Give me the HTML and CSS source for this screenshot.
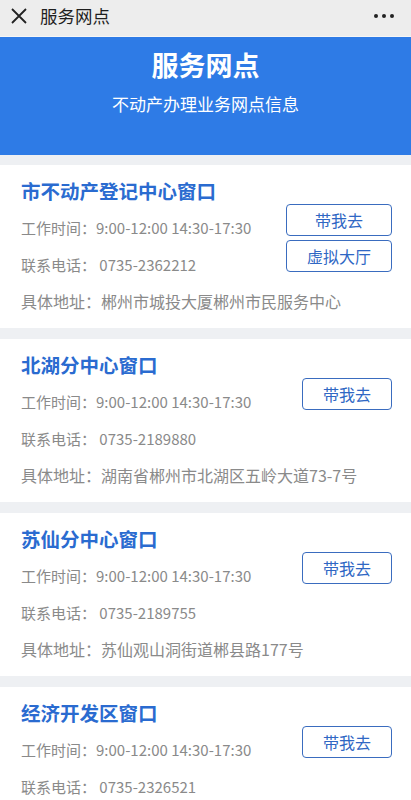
FILE: index.html
```html
<!DOCTYPE html>
<html lang="zh-CN">
<head>
<meta charset="utf-8">
<title>服务网点</title>
<link rel="stylesheet" href="styles.css">
</head>
<body>
<header class="topbar">
  <svg class="close" width="18" height="18" viewBox="0 0 18 18"><path d="M2 2 L16 16 M16 2 L2 16" stroke="#222" stroke-width="1.8" fill="none"/></svg>
  <span class="topbar-title">服务网点</span>
  <span class="more"><i></i><i></i><i></i></span>
</header>
<section class="banner">
  <h1 class="banner-title">服务网点</h1>
  <p class="banner-sub">不动产办理业务网点信息</p>
</section>
<main class="list">
  <div class="card">
    <div class="info">
      <div class="name">市不动产登记中心窗口</div>
      <div class="line">工作时间：9:00-12:00 14:30-17:30</div>
      <div class="line">联系电话： 0735-2362212</div>
      <div class="line addr">具体地址：郴州市城投大厦郴州市民服务中心</div>
    </div>
    <div class="actions">
      <button class="btn">带我去</button>
      <button class="btn">虚拟大厅</button>
    </div>
  </div>
  <div class="card">
    <div class="info">
      <div class="name">北湖分中心窗口</div>
      <div class="line">工作时间：9:00-12:00 14:30-17:30</div>
      <div class="line">联系电话： 0735-2189880</div>
      <div class="line addr">具体地址：湖南省郴州市北湖区五岭大道73-7号</div>
    </div>
    <div class="actions">
      <button class="btn">带我去</button>
    </div>
  </div>
  <div class="card">
    <div class="info">
      <div class="name">苏仙分中心窗口</div>
      <div class="line">工作时间：9:00-12:00 14:30-17:30</div>
      <div class="line">联系电话： 0735-2189755</div>
      <div class="line addr">具体地址：苏仙观山洞街道郴县路177号</div>
    </div>
    <div class="actions">
      <button class="btn">带我去</button>
    </div>
  </div>
  <div class="card">
    <div class="info">
      <div class="name">经济开发区窗口</div>
      <div class="line">工作时间：9:00-12:00 14:30-17:30</div>
      <div class="line">联系电话： 0735-2326521</div>
      <div class="line addr">具体地址：郴州经济开发区</div>
    </div>
    <div class="actions">
      <button class="btn">带我去</button>
    </div>
  </div>
</main>
</body>
</html>
```
FILE: styles.css
```css
* { box-sizing: border-box; }
html, body { margin: 0; padding: 0; }
body {
  font-family: "Noto Sans CJK SC", "Noto Sans", sans-serif;
  background: #eef0f3;
  width: 411px;
}
.topbar {
  height: 37px;
  background: #ededed;
  border-bottom: 1px solid #f6f6f6;
  display: flex;
  align-items: center;
  padding: 0 17px 0 10px;
}
.close { display: block; margin-right: 12px; margin-top: -4px; }
.topbar-title {
  font-size: 17.5px;
  color: #1f1f1f;
  flex: 1;
  line-height: 24px;
  margin-top: -5px;
}
.more { display: flex; gap: 4px; margin-top: -4px; }
.more i { width: 4px; height: 4px; border-radius: 50%; background: #222; display: block; }
.banner {
  background: #2e7be6;
  height: 118px;
  text-align: center;
  color: #fff;
  padding-top: 9px;
}
.banner-title {
  margin: 0;
  font-size: 27px;
  font-weight: 700;
  line-height: 38px;
}
.banner-sub {
  margin: 0;
  margin-top: 8px;
  font-size: 17px;
  line-height: 24px;
}
.list { padding-top: 10px; display: flex; flex-direction: column; gap: 11px; }
.card {
  background: #fff;
  height: 163px;
  display: flex;
  padding: 12px 19px 8px 21px;
}
.info { flex: 1; min-width: 0; }
.name {
  font-size: 19.5px;
  font-weight: 700;
  color: #2a6bd0;
  line-height: 28px;
  margin-bottom: 4px;
}
.line {
  font-size: 15px;
  color: #8a8a8a;
  line-height: 37px;
  white-space: nowrap;
}
.line.addr { font-size: 16px; }
.actions {
  flex: none;
  display: flex;
  flex-direction: column;
  align-items: stretch;
  gap: 4px;
  padding-top: 27px;
}
.btn {
  font-family: inherit;
  font-size: 16px;
  color: #2f67c4;
  background: #fff;
  border: 1px solid #3a6cbf;
  border-radius: 4px;
  height: 32px;
  padding: 0 20px;
  line-height: 30px;
  white-space: nowrap;
}
```
